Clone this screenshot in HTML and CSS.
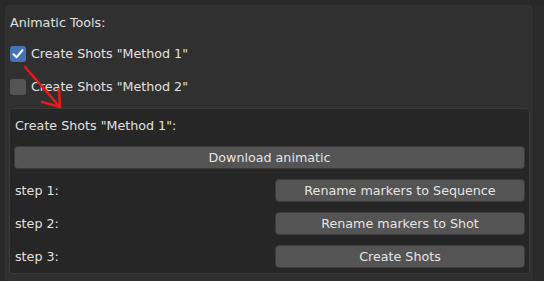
FILE: index.html
```html
<!DOCTYPE html>
<html>
<head>
<meta charset="utf-8">
<link rel="stylesheet" href="styles.css">
</head>
<body>
<div class="region">
  <div class="panel">
    <div class="label title">Animatic Tools:</div>
    <div class="check-row">
      <span class="checkbox checked">
        <svg width="16" height="16" viewBox="0 0 16 16"><path d="M3.5 8.3 L6.5 11.3 L12.5 4.2" fill="none" stroke="#ffffff" stroke-width="2" stroke-linecap="round" stroke-linejoin="round"/></svg>
      </span>
      <span class="label">Create Shots "Method 1"</span>
    </div>
    <div class="check-row">
      <span class="checkbox"></span>
      <span class="label">Create Shots "Method 2"</span>
    </div>
    <div class="box">
      <div class="label box-title">Create Shots "Method 1":</div>
      <div class="btn wide">Download animatic</div>
      <div class="step-row">
        <span class="label step">step 1:</span>
        <div class="btn half">Rename markers to Sequence</div>
      </div>
      <div class="step-row">
        <span class="label step">step 2:</span>
        <div class="btn half">Rename markers to Shot</div>
      </div>
      <div class="step-row">
        <span class="label step">step 3:</span>
        <div class="btn half">Create Shots</div>
      </div>
    </div>
  </div>
  <div class="scroll"></div>
  <svg class="arrow" width="80" height="120" viewBox="0 0 80 120">
    <path d="M25 67 L59 106 M42 102 L60 107 L59 89" fill="none" stroke="#e31b1b" stroke-width="2.6" stroke-linecap="round" stroke-linejoin="round"/>
  </svg>
</div>
</body>
</html>
```
FILE: styles.css
```css
* { box-sizing: border-box; }
html, body { margin: 0; padding: 0; }
body {
  width: 544px;
  height: 281px;
  overflow: hidden;
  background: #282828;
  font-family: "DejaVu Sans", "Liberation Sans", sans-serif;
  font-size: 12.7px;
  color: #e0e0e0;
}
.region {
  position: relative;
  display: flex;
  height: 281px;
  padding: 5px 0 0 5px;
}
.panel {
  width: 528px;
  height: 276px;
  background: #303030;
  border-radius: 4px 4px 0 0;
  padding: 0 0 0 4px;
}
.scroll {
  width: 11px;
  background: #2b2b2b;
  border-left: 1px solid #262626;
}
.label { white-space: nowrap; line-height: 16px; }
.title { padding: 10px 0 0 1px; height: 32px; }
.check-row {
  display: flex;
  align-items: center;
  height: 33px;
  gap: 5px;
  padding-left: 1px;
}
.checkbox {
  width: 16px;
  height: 16px;
  border-radius: 3px;
  background: #545454;
  display: flex;
}
.checkbox.checked { background: #4772b3; }
.box {
  margin-top: 5px;
  width: 521px;
  height: 166px;
  background: #262626;
  border: 1px solid #3a3a3a;
  border-radius: 4px;
  padding: 0 4px 0 4px;
}
.box-title { height: 37px; padding: 9px 0 0 1px; }
.btn {
  height: 23px;
  background: #545454;
  border: 1px solid #3c3c3c;
  border-radius: 4px;
  display: flex;
  align-items: center;
  justify-content: center;
  white-space: nowrap;
  color: #e4e4e4;
}
.wide { width: 511px; margin-bottom: 10px; }
.step-row {
  display: flex;
  align-items: center;
  height: 23px;
  margin-bottom: 10px;
}
.step { width: 261px; padding-left: 1px; }
.half { width: 250px; }
.arrow { position: absolute; left: 0; top: 0; pointer-events: none; }
```
